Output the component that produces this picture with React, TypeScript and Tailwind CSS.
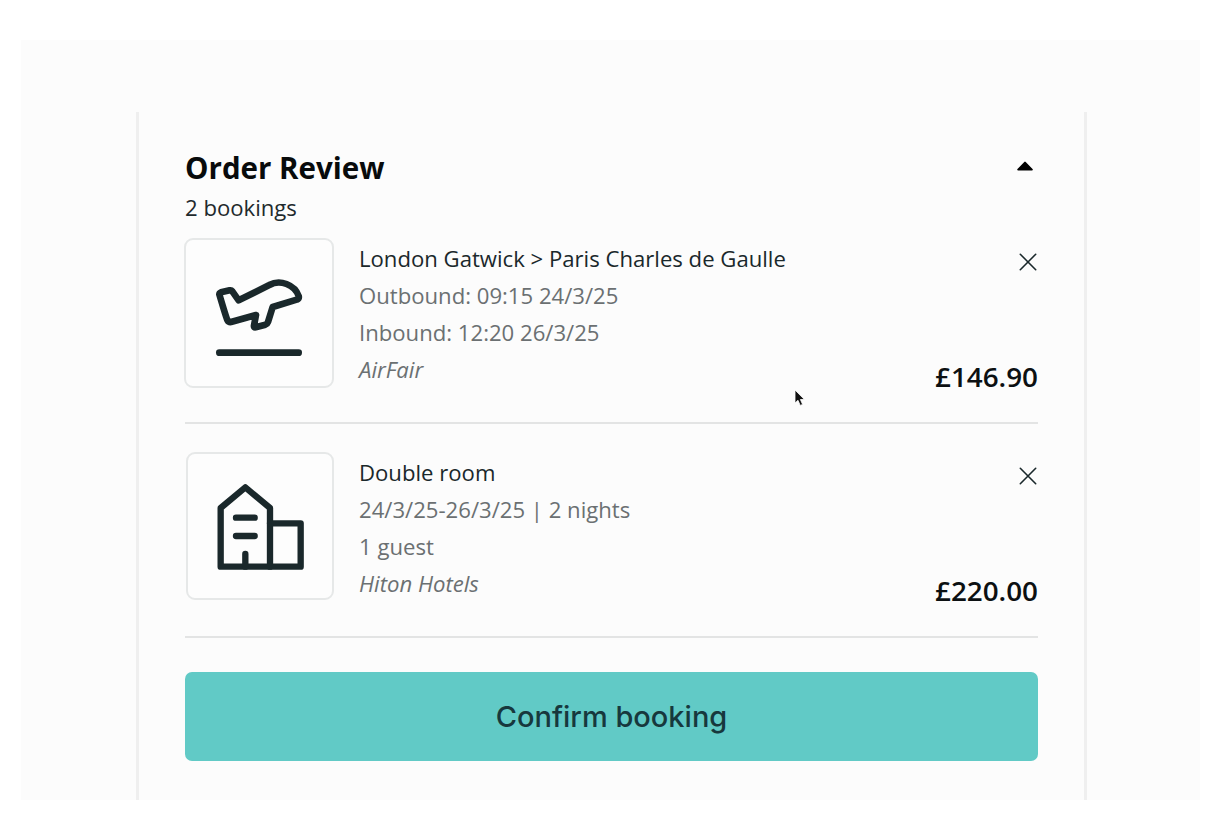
import clsx from "clsx";
import React, { useState } from "react";

const PlaneIcon = () => (
  <svg
    viewBox="6 6 438 438"
    className="w-full h-full"
    fill="none"
    stroke="#1a282b"
    strokeWidth="20"
    strokeLinecap="round"
    strokeLinejoin="round"
  >
    <path d="M111 163 L137 157 Q142 156 145 160 L164 187 L256 141 C288 123 332 140 344 174 Q346 181 338 185 L266 207 L252 252 Q250 258 244 260 L215 268 Q209 269 210 263 L216 231 L141 252 Q134 253 130 246 Q126 237 106 169 Q106 165 111 163 Z" />
    <path d="M106 344 H344" />
  </svg>
);

const HotelIcon = () => (
  <svg
    viewBox="6 6 432 432"
    className="w-full h-full"
    fill="none"
    stroke="#1a282b"
    strokeWidth="19"
    strokeLinecap="round"
    strokeLinejoin="round"
  >
    <path d="M104 344 V168 L178 106 L252 168 V344 Z" />
    <path d="M252 214 H344 V344 H252" />
    <path d="M150 197 H206 M150 252 H206 M178 306 V344" />
  </svg>
);

const CloseIcon = () => (
  <svg viewBox="0 0 18 18" className="w-[18px] h-[18px]" stroke="#1a282b" strokeWidth="1.6" strokeLinecap="round">
    <path d="M1.3 1.3 L16.7 16.7 M16.7 1.3 L1.3 16.7" />
  </svg>
);

const Cursor = () => (
  <svg viewBox="0 0 12 18" className="absolute left-[794px] top-[389px] w-3 h-[18px]">
    <path
      d="M1 1 V14 L4 11.3 L6.2 16.4 L8.6 15.4 L6.4 10.5 H10.4 Z"
      fill="#111111"
      stroke="#ffffff"
      strokeWidth="0.8"
    />
  </svg>
);

const bookings = [
  {
    id: "flight",
    icon: <PlaneIcon />,
    title: "London Gatwick > Paris Charles de Gaulle",
    details: ["Outbound: 09:15 24/3/25", "Inbound: 12:20 26/3/25"],
    provider: "AirFair",
    price: "£146.90",
  },
  {
    id: "hotel",
    icon: <HotelIcon />,
    title: "Double room",
    details: ["24/3/25-26/3/25 | 2 nights", "1 guest"],
    provider: "Hiton Hotels",
    price: "£220.00",
  },
];

const BookingRow = ({ booking, first, onRemove }) => (
  <li className={clsx("flex border-b-2 border-[#e3e4e4] pb-[34px]", !first && "pt-7")}>
    <div
      className={clsx(
        "shrink-0 rounded-[9px] border-2 border-[#e6e8e8] bg-[#fdfdfd]",
        first ? "-ml-px w-[150px] h-[150px]" : "ml-px w-[148px] h-[148px]"
      )}
    >
      {booking.icon}
    </div>
    <div className="ml-[25px] mt-[2px] flex-1 text-[22.13px] leading-[37px] text-[#6b7072]">
      <div className="text-[#1a282b]">{booking.title}</div>
      {booking.details.map((line) => (
        <div key={line}>{line}</div>
      ))}
      <div className="italic">{booking.provider}</div>
    </div>
    <div className="flex h-[150px] flex-col items-end justify-between pt-[15px] pb-px">
      <button className="mr-px" aria-label="Remove" onClick={onRemove}>
        <CloseIcon />
      </button>
      <div className="text-[27.8px] leading-[22px] font-semibold text-[#0c1012]">{booking.price}</div>
    </div>
  </li>
);

const App = () => {
  const [items, setItems] = useState(bookings);
  const [open, setOpen] = useState(true);

  return (
    <div className="relative h-[840px] w-[1220px] overflow-hidden bg-white pt-10 pl-[21px] font-['Open_Sans',sans-serif]">
      <div className="h-[760px] w-[1179px] bg-[#fcfcfc] pt-[72px] pl-[115px]">
        <section className="h-[688px] w-[951px] border-x-[3px] border-[#efefef] px-[46px] pt-9">
          <div className="flex h-10 items-center justify-between">
            <h1 className="text-[29.5px] leading-10 font-bold text-[#080b0c]">Order Review</h1>
            <button className="mr-[5px]" aria-label="Toggle" onClick={() => setOpen(!open)}>
              <svg
                viewBox="0 0 16 10"
                className={clsx("mb-1 h-2.5 w-4", !open && "rotate-180")}
                fill="#000"
                stroke="#000"
                strokeWidth="2"
                strokeLinejoin="round"
              >
                <path d="M1.2 8.6 L8 1.6 L14.8 8.6 Z" />
              </svg>
            </button>
          </div>
          <p className="mb-3 text-[22.13px] leading-[38px] text-[#1f2a2d]">{items.length} bookings</p>
          {open && (
            <ul>
              {items.map((booking, index) => (
                <BookingRow
                  key={booking.id}
                  booking={booking}
                  first={index === 0}
                  onRemove={() => setItems(items.filter((item) => item.id !== booking.id))}
                />
              ))}
            </ul>
          )}
          <button className="mt-[34px] h-[89px] w-full rounded-[7px] bg-[#61cac6] font-['Inter',sans-serif] text-[29px] font-medium text-[#17383d]">
            Confirm booking
          </button>
        </section>
      </div>
      <Cursor />
    </div>
  );
};

export default App;
